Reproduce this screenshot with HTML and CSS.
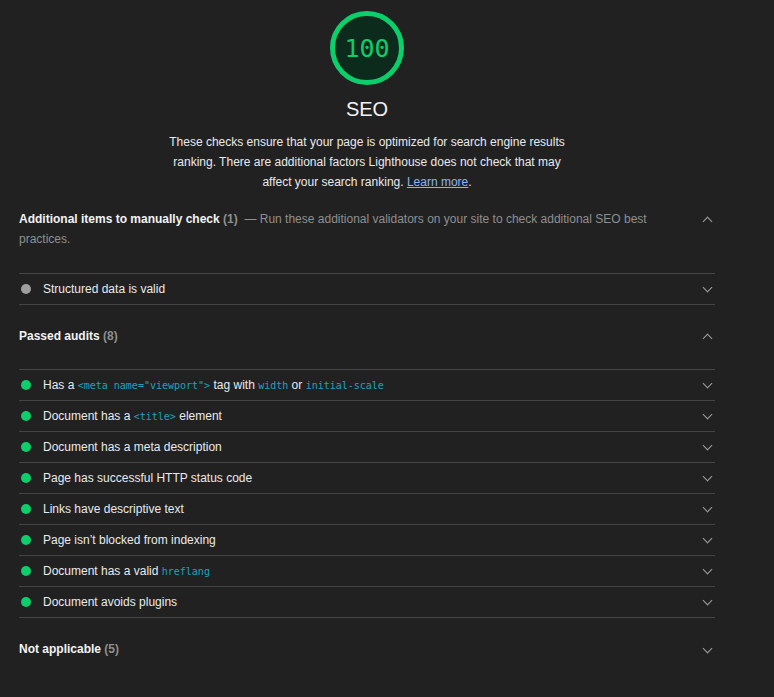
FILE: index.html
```html
<!DOCTYPE html>
<html>
<head>
<meta charset="utf-8">
<link rel="stylesheet" href="styles.css">
</head>
<body>
<div class="report">
  <div class="cat-header">
    <div class="gauge">
      <svg class="gauge-svg" width="74" height="74" viewBox="0 0 74 74">
        <circle cx="37" cy="37" r="34.5" fill="#0c2b1c" stroke="#0cce6b" stroke-width="5"/>
      </svg>
      <span class="gauge-score">100</span>
    </div>
    <div class="cat-title">SEO</div>
    <p class="cat-desc">These checks ensure that your page is optimized for search engine results ranking. There are additional factors Lighthouse does not check that may affect your search ranking. <a href="#">Learn more</a>.</p>
  </div>

  <div class="group">
    <div class="group-head">
      <div class="group-text"><span class="gtitle">Additional items to manually check</span> <span class="gcount">(1)</span> <span class="gdesc">&nbsp;— Run these additional validators on your site to check additional SEO best practices.</span></div>
      <span class="chev up"></span>
    </div>
    <div class="audit"><span class="dot gray"></span><span class="atext">Structured data is valid</span><span class="chev"></span></div>
  </div>

  <div class="group">
    <div class="group-head">
      <div class="group-text"><span class="gtitle">Passed audits</span> <span class="gcount">(8)</span></div>
      <span class="chev up"></span>
    </div>
    <div class="audit"><span class="dot"></span><span class="atext">Has a <code>&lt;meta name="viewport"&gt;</code> tag with <code>width</code> or <code>initial-scale</code></span><span class="chev"></span></div>
    <div class="audit"><span class="dot"></span><span class="atext">Document has a <code>&lt;title&gt;</code> element</span><span class="chev"></span></div>
    <div class="audit"><span class="dot"></span><span class="atext">Document has a meta description</span><span class="chev"></span></div>
    <div class="audit"><span class="dot"></span><span class="atext">Page has successful HTTP status code</span><span class="chev"></span></div>
    <div class="audit"><span class="dot"></span><span class="atext">Links have descriptive text</span><span class="chev"></span></div>
    <div class="audit"><span class="dot"></span><span class="atext">Page isn’t blocked from indexing</span><span class="chev"></span></div>
    <div class="audit"><span class="dot"></span><span class="atext">Document has a valid <code>hreflang</code></span><span class="chev"></span></div>
    <div class="audit"><span class="dot"></span><span class="atext">Document avoids plugins</span><span class="chev"></span></div>
  </div>

  <div class="group">
    <div class="group-head last">
      <div class="group-text"><span class="gtitle">Not applicable</span> <span class="gcount">(5)</span></div>
      <span class="chev"></span>
    </div>
  </div>
</div>
</body>
</html>
```

FILE: styles.css
```css
html, body {
  margin: 0;
  padding: 0;
  background: #212121;
}
body {
  font-family: "Liberation Sans", Arial, sans-serif;
  color: #e8eaed;
  font-size: 12px;
}
.report {
  width: 696px;
  margin-left: 19px;
  padding-top: 11px;
}
.cat-header {
  display: flex;
  flex-direction: column;
  align-items: center;
}
.gauge {
  position: relative;
  width: 74px;
  height: 74px;
}
.gauge-svg {
  display: block;
}
.gauge-score {
  position: absolute;
  inset: 0;
  display: flex;
  align-items: center;
  justify-content: center;
  font-family: "DejaVu Sans Mono", monospace;
  font-size: 25px;
  color: #0cce6b;
}
.cat-title {
  margin-top: 12px;
  font-size: 20px;
  line-height: 24px;
  color: #f1f3f4;
}
.cat-desc {
  margin: 11px 0 0;
  width: 410px;
  text-align: center;
  font-size: 12px;
  line-height: 20px;
  color: #e8eaed;
}
.cat-desc a {
  color: #8ab4f8;
}
.cat-header + .group {
  margin-top: 17px;
}
.group-head {
  display: flex;
  align-items: flex-start;
  justify-content: space-between;
  padding: 0 0 24px;
  line-height: 20px;
}
.group + .group .group-head {
  padding-top: 21px;
  padding-bottom: 23px;
}
.group + .group .group-head.last {
  padding-bottom: 30px;
}
.group-text {
  width: 650px;
}
.gtitle {
  font-weight: bold;
  color: #f1f3f4;
}
.gcount {
  font-weight: bold;
  color: #8f8f8f;
}
.gdesc {
  color: #8f8f8f;
}
.audit {
  display: flex;
  align-items: center;
  height: 30px;
  border-top: 1px solid #444;
}
.group .audit:last-child {
  border-bottom: 1px solid #444;
}
.dot {
  width: 10px;
  height: 10px;
  border-radius: 50%;
  background: #0cce6b;
  margin-left: 2px;
  margin-right: 12px;
  flex: none;
}
.dot.gray {
  background: #9e9e9e;
}
.atext {
  flex: 1;
  color: #e8eaed;
}
code {
  font-family: "DejaVu Sans Mono", monospace;
  font-size: 10px;
  color: #1ea3bd;
}
.chev {
  width: 6px;
  height: 6px;
  border-right: 1.5px solid #a0a0a0;
  border-bottom: 1.5px solid #a0a0a0;
  transform: rotate(45deg);
  margin-right: 4px;
  margin-top: -3px;
  flex: none;
}
.group-head .chev {
  margin-top: 6px;
}
.chev.up {
  transform: rotate(-135deg);
  margin-top: 9px;
}
```
